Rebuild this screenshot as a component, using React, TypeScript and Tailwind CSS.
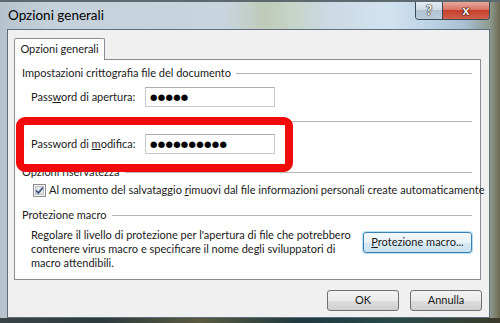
import React from "react";

const font = { fontFamily: "Lato, 'Noto Sans', sans-serif" };

function GroupHeader({ label }: { label?: string }) {
  return (
    <div className="flex items-center h-[14px] pl-[7px] pr-[8px]">
      {label ? <span className="whitespace-nowrap mr-[5px]">{label}</span> : null}
      <div className="flex-1 h-px bg-[#b5b5b5]" />
    </div>
  );
}

function PwdRow({ label, dots }: { label: React.ReactNode; dots: string }) {
  return (
    <div className="flex items-center pl-[16px] h-[20px]">
      <div className="w-[114px] whitespace-nowrap">{label}</div>
      <div className="w-[130px] h-[20px] bg-white border border-[#c6c9d0] border-t-[#abadb3] flex items-center pl-[4px]">
        <span className="text-[8.5px] tracking-[0.3px] text-black leading-none" style={{ fontFamily: "'DejaVu Sans', sans-serif" }}>{dots}</span>
      </div>
    </div>
  );
}

function WinButton({ children, focused, className }: { children: React.ReactNode; focused?: boolean; className?: string }) {
  return (
    <div
      className={
        "h-[21px] rounded-[3px] flex items-center justify-center border whitespace-nowrap shrink-0 " +
        (focused
          ? "border-[#3c7fb1] shadow-[0_0_0_1px_#b8e0f5] bg-[linear-gradient(to_bottom,#f4f9fc_0%,#e8f2f8_50%,#d6e9f4_51%,#c8e2f1_100%)] "
          : "border-[#707070] bg-[linear-gradient(to_bottom,#f2f2f2_0%,#ebebeb_50%,#dddddd_51%,#cfcfcf_100%)] ") +
        (className || "")
      }
    >
      {children}
    </div>
  );
}

export default function App() {
  return (
    <div
      className="w-[500px] h-[323px] overflow-hidden flex flex-col text-[11px] text-[#1a1a1a] bg-[linear-gradient(to_right,#b7c3cc_0%,#c4d0da_10%,#c9d5de_45%,#bfcab8_53%,#c6d3c7_58%,#cbdae4_66%,#d2e3f0_78%,#bcd2e6_86%,#a9bfd2_93%,#8e9a8e_98%,#6b6a52_100%)]"
      style={font}
    >
      {/* title bar */}
      <div className="h-[29px] flex items-start shrink-0 border-t-2 border-[#5c6a70]">
        <div className="pl-[8px] pt-[5px] text-[13.5px] text-black leading-[16px]">Opzioni generali</div>
        <div className="flex-1" />
        <div className="mr-[10px] flex h-[18px] border border-t-0 border-[#3d4b58] rounded-b-[4px] overflow-hidden">
          <div className="w-[27px] h-full flex items-center justify-center bg-[linear-gradient(to_bottom,#e4ecf3_0%,#cdd9e4_45%,#b3c3d2_50%,#bccbd8_100%)] border-r border-[#3d4b58]">
            <span className="text-[13px] font-bold text-white leading-none [text-shadow:0_0_1px_#222,0_0_1px_#222,0_0_2px_#333]">?</span>
          </div>
          <div className="w-[46px] h-full flex items-center justify-center bg-[linear-gradient(to_bottom,#e9a99c_0%,#d77565_45%,#c4402c_50%,#d0604c_100%)]">
            <span className="text-[13px] font-bold text-white leading-none [text-shadow:0_0_1px_#300,0_0_1px_#300,0_0_2px_#400]">x</span>
          </div>
        </div>
      </div>

      {/* client */}
      <div className="ml-[7px] mr-[10px] flex-1 bg-[#f0f0f0] border border-[#5e6e7c] flex flex-col pl-[6px] pr-[8px] pt-[8px]">
        {/* tab */}
        <div className="flex relative z-10 -mb-px">
          <div className="w-[91px] h-[22px] bg-white border border-b-0 border-[#898c95] rounded-t-[2px] flex items-center justify-center pb-[1px]">
            Opzioni generali
          </div>
        </div>
        {/* panel */}
        <div className="relative h-[221px] bg-white border border-[#898c95] flex flex-col">
          <div className="mt-[6px]">
            <GroupHeader label="Impostazioni crittografia file del documento" />
          </div>
          <div className="mt-[7px]">
            <PwdRow label={<>Pass<u>w</u>ord di apertura:</>} dots="●●●●●" />
          </div>
          <div className="mt-[7px]">
            <GroupHeader />
          </div>
          <div className="mt-[6px]">
            <PwdRow label={<>Password di <u>m</u>odifica:</>} dots="●●●●●●●●●●" />
          </div>
          <div className="mt-[11px]">
            <GroupHeader label="Opzioni riservatezza" />
          </div>
          <div className="mt-[4px] flex items-center pl-[18px] h-[14px]">
            <svg width="13" height="13" viewBox="0 0 13 13" className="shrink-0">
              <rect x="0.5" y="0.5" width="12" height="12" fill="#f4f4f4" stroke="#8e8f8f" />
              <rect x="2.5" y="2.5" width="8" height="8" fill="#e3e6ea" stroke="#c0c4c9" />
              <path d="M3 6.5 L5.3 9 L10 3.5" fill="none" stroke="#3c4e7e" strokeWidth="1.8" />
            </svg>
            <span className="ml-[3px] whitespace-nowrap">
              Al momento del salvataggio <u>r</u>imuovi dal file informazioni personali create automaticamente
            </span>
          </div>
          <div className="mt-[11px]">
            <GroupHeader label="Protezione macro" />
          </div>
          <div className="mt-[6px] flex pl-[16px] pr-[8px]">
            <div className="flex-1 leading-[14px] whitespace-nowrap">
              Regolare il livello di protezione per l'apertura di file che potrebbero
              <br />
              contenere virus macro e specificare il nome degli sviluppatori di
              <br />
              macro attendibili.
            </div>
            <WinButton focused className="w-[109px] h-[20px] mt-[4px]">
              <span>
                <u>P</u>rotezione macro...
              </span>
            </WinButton>
          </div>

          {/* red highlight */}
          <div className="absolute left-[1px] top-[57px] w-[277px] h-[55px] border-[8px] border-[#f20a0a] rounded-[9px] pointer-events-none z-20" />
        </div>
        {/* buttons */}
        <div className="mt-[10px] flex justify-end gap-[11px] -mr-px">
          <WinButton className="w-[72px]">OK</WinButton>
          <WinButton className="w-[72px]">Annulla</WinButton>
        </div>
      </div>
      {/* bottom frame */}
      <div className="h-[5px] shrink-0 bg-[linear-gradient(to_right,#3a4448_0%,#2c3a3e_20%,#5a5a3e_40%,#1e3a40_60%,#2a4a48_80%,#3a3a2a_100%)]" />
    </div>
  );
}
